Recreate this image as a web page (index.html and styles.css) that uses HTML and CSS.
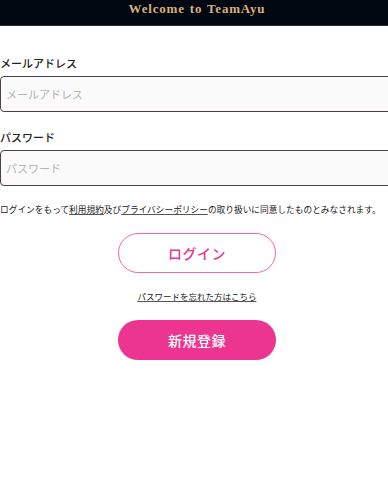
FILE: index.html
```html
<!DOCTYPE html>
<html lang="ja">
<head>
<meta charset="utf-8">
<link rel="stylesheet" href="styles.css">
</head>
<body>
<div class="page">
  <header class="header">Welcome to TeamAyu</header>
  <main class="form">
    <label class="label">メールアドレス</label>
    <div class="input">メールアドレス</div>
    <label class="label label-pw">パスワード</label>
    <div class="input">パスワード</div>
    <p class="terms">ログインをもって<u>利用規約</u>及び<u>プライバシーポリシー</u>の取り扱いに同意したものとみなされます。</p>
    <div class="btn btn-outline">ログイン</div>
    <a class="forgot">パスワードを忘れた方はこちら</a>
    <div class="btn btn-fill">新規登録</div>
  </main>
</div>
</body>
</html>
```
FILE: styles.css
```css
html, body {
  margin: 0;
  padding: 0;
  overflow: hidden;
  background: #fff;
}
.page {
  width: 394px;
  font-family: "Noto Sans CJK JP", "Noto Sans", sans-serif;
  color: #222;
}
.header {
  height: 26px;
  background: #020812;
  border-bottom: 1px solid #2a2f36;
  box-sizing: border-box;
  color: #d8b07a;
  font-family: "Liberation Serif", "DejaVu Serif", serif;
  font-weight: bold;
  font-size: 13px;
  letter-spacing: 0.8px;
  word-spacing: 1px;
  text-align: center;
  line-height: 18px;
}
.form {
  display: flex;
  flex-direction: column;
  padding-top: 30px;
}
.label {
  font-size: 11px;
  font-weight: 500;
  line-height: 14px;
  color: #222;
}
.label-pw {
  margin-top: 18px;
}
.input {
  margin-top: 6px;
  height: 36px;
  box-sizing: border-box;
  border: 1.5px solid #4b3f48;
  border-radius: 4px;
  background: #fafafa;
  font-size: 11px;
  color: #b3b3b3;
  padding-left: 5px;
  display: flex;
  align-items: center;
}
.terms {
  margin: 17px 0 0;
  font-size: 8.7px;
  line-height: 14px;
  color: #222;
  white-space: nowrap;
}
.terms u {
  text-decoration-color: #555;
}
.btn {
  align-self: center;
  width: 158px;
  height: 40px;
  box-sizing: border-box;
  border-radius: 20px;
  display: flex;
  align-items: center;
  justify-content: center;
  font-size: 14px;
  font-weight: 500;
  letter-spacing: 0.5px;
}
.btn-outline {
  margin-top: 16px;
  border: 1.5px solid #f06aa8;
  color: #e8378c;
}
.btn-fill {
  margin-top: 17px;
  background: #eb3590;
  color: #fff;
}
.forgot {
  align-self: center;
  margin-top: 16px;
  font-size: 8.5px;
  line-height: 14px;
  color: #222;
  text-decoration: underline;
  text-decoration-color: #555;
}
```
